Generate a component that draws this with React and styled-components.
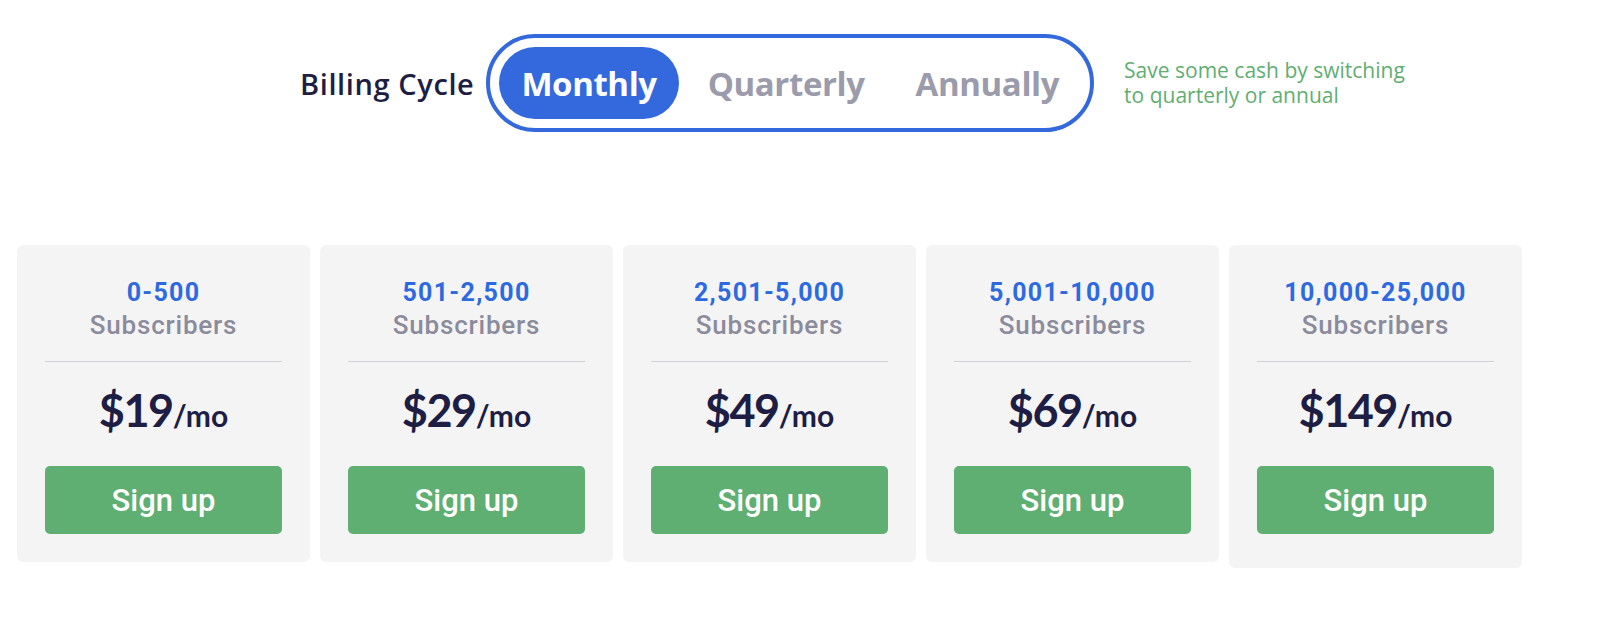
import React from 'react';
import styled, { createGlobalStyle } from 'styled-components';

const GlobalStyle = createGlobalStyle`
  body {
    margin: 0;
    background: #ffffff;
    font-family: 'Open Sans', 'Liberation Sans', sans-serif;
  }
`;

const plans = [
  { range: '0-500', price: 19 },
  { range: '501-2,500', price: 29 },
  { range: '2,501-5,000', price: 49 },
  { range: '5,001-10,000', price: 69 },
  { range: '10,000-25,000', price: 149, tall: true },
];

const cycles = ['Monthly', 'Quarterly', 'Annually'];

export default function App() {
  const active = 'Monthly';
  return (
    <Page>
      <GlobalStyle />
      <BillingRow>
        <BillingLabel>Billing Cycle</BillingLabel>
        <Toggle>
          {cycles.map((c) => (
            <ToggleOption key={c} $active={c === active}>
              {c}
            </ToggleOption>
          ))}
        </Toggle>
        <SaveNote>
          Save some cash by switching
          <br />
          to quarterly or annual
        </SaveNote>
      </BillingRow>

      <CardRow>
        {plans.map((p) => (
          <Card key={p.range} $tall={p.tall}>
            <Range>{p.range}</Range>
            <Unit>Subscribers</Unit>
            <Divider />
            <Price>
              ${p.price}
              <Per>/mo</Per>
            </Price>
            <SignUp>Sign up</SignUp>
          </Card>
        ))}
      </CardRow>
    </Page>
  );
}

const Page = styled.div`
  width: 1600px;
  height: 623px;
  overflow: hidden;
`;

const BillingRow = styled.div`
  display: flex;
  align-items: center;
  padding: 34px 0 0 300px;
`;

const BillingLabel = styled.div`
  font-size: 29px;
  font-weight: 600;
  color: #1e1e45;
  margin-right: 12px;
  letter-spacing: 0.6px;
`;

const Toggle = styled.div`
  display: flex;
  align-items: center;
  gap: 7px;
  padding: 9px;
  border: 4px solid #3369dd;
  border-radius: 50px;
`;

const ToggleOption = styled.div`
  height: 72px;
  display: flex;
  align-items: center;
  padding: 0 22px;
  border-radius: 36px;
  font-size: 33px;
  font-weight: 700;
  letter-spacing: -0.4px;
  color: ${(p) => (p.$active ? '#ffffff' : '#9b9bab')};
  background: ${(p) => (p.$active ? '#3369dd' : 'transparent')};
`;

const SaveNote = styled.div`
  margin-left: 30px;
  font-size: 21px;
  line-height: 25px;
  color: #5fae72;
`;

const CardRow = styled.div`
  display: flex;
  align-items: flex-start;
  gap: 10px;
  padding: 113px 0 0 17px;
`;

const Card = styled.div`
  width: 293px;
  box-sizing: border-box;
  background: #f4f4f4;
  border-radius: 6px;
  padding: 32px 28px ${(p) => (p.$tall ? '34px' : '28px')};
  display: flex;
  flex-direction: column;
  align-items: center;
`;

const Range = styled.div`
  font-family: 'Roboto', sans-serif;
  font-size: 25px;
  line-height: 32px;
  font-weight: 700;
  color: #2d6ae0;
  letter-spacing: 1.3px;
`;

const Unit = styled.div`
  font-family: 'Roboto', sans-serif;
  font-size: 26px;
  line-height: 32px;
  font-weight: 500;
  color: #8b8b9c;
  letter-spacing: 0.8px;
`;

const Divider = styled.div`
  align-self: stretch;
  height: 1px;
  background: #d2d2d6;
  margin: 20px 0 0;
`;

const Price = styled.div`
  margin-top: 20px;
  font-family: 'Lato', sans-serif;
  font-size: 45px;
  line-height: 56px;
  font-weight: 700;
  color: #1e1e45;
  letter-spacing: -1.5px;
`;

const Per = styled.span`
  font-size: 30px;
  letter-spacing: 0;
`;

const SignUp = styled.button`
  margin-top: 23px;
  align-self: stretch;
  height: 68px;
  border: none;
  border-radius: 5px;
  background: #5fae72;
  color: #ffffff;
  font-family: 'Roboto', sans-serif;
  font-size: 31px;
  font-weight: 500;
  cursor: pointer;
`;
